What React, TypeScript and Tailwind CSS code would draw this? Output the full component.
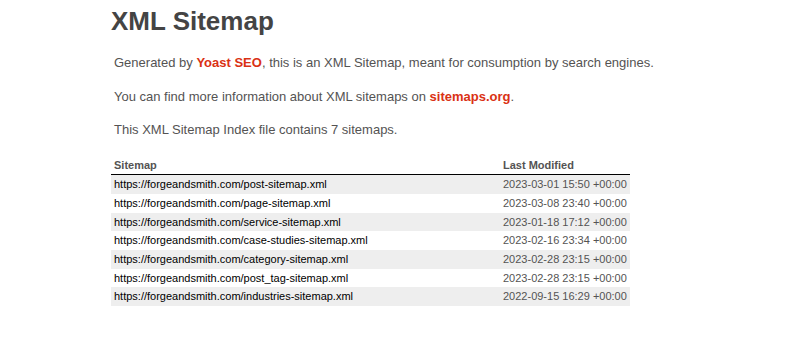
import React from 'react';

const rows: [string, string][] = [
  ['https://forgeandsmith.com/post-sitemap.xml', '2023-03-01 15:50 +00:00'],
  ['https://forgeandsmith.com/page-sitemap.xml', '2023-03-08 23:40 +00:00'],
  ['https://forgeandsmith.com/service-sitemap.xml', '2023-01-18 17:12 +00:00'],
  ['https://forgeandsmith.com/case-studies-sitemap.xml', '2023-02-16 23:34 +00:00'],
  ['https://forgeandsmith.com/category-sitemap.xml', '2023-02-28 23:15 +00:00'],
  ['https://forgeandsmith.com/post_tag-sitemap.xml', '2023-02-28 23:15 +00:00'],
  ['https://forgeandsmith.com/industries-sitemap.xml', '2022-09-15 16:29 +00:00'],
];

const App: React.FC = () => {
  return (
    <div
      className="min-h-[344px] bg-white pl-[111px] pt-[6px] text-[13px] text-[#545353]"
      style={{ fontFamily: '"Liberation Sans", Arial, Helvetica, sans-serif' }}
    >
      <h1 className="text-[26px] leading-[30px] font-bold text-[#444]">XML Sitemap</h1>

      <p className="mx-[3px] mt-[19px] leading-[15.6px]">
        Generated by <a className="font-bold text-[#da3114]">Yoast SEO</a>, this is an XML Sitemap, meant for
        consumption by search engines.
      </p>
      <p className="mx-[3px] mt-[18px] leading-[15.6px]">
        You can find more information about XML sitemaps on{' '}
        <a className="font-bold text-[#da3114]">sitemaps.org</a>.
      </p>
      <p className="mx-[3px] mt-[18px] leading-[15.6px]">This XML Sitemap Index file contains 7 sitemaps.</p>

      <table className="mt-[18px] w-[519px] border-collapse text-[11px]">
        <thead>
          <tr>
            <th className="w-[389px] border-b border-black p-[3px] text-left font-bold leading-[12.65px]">Sitemap</th>
            <th className="border-b border-black p-[3px] text-left font-bold leading-[12.65px]">Last Modified</th>
          </tr>
        </thead>
        <tbody>
          {rows.map(([url, date], i) => (
            <tr key={url} className={i % 2 === 0 ? 'bg-[#eee]' : ''}>
              <td className="p-[3px] leading-[12.65px] text-black">
                <a>{url}</a>
              </td>
              <td className="p-[3px] leading-[12.65px]">{date}</td>
            </tr>
          ))}
        </tbody>
      </table>
    </div>
  );
};

export default App;
